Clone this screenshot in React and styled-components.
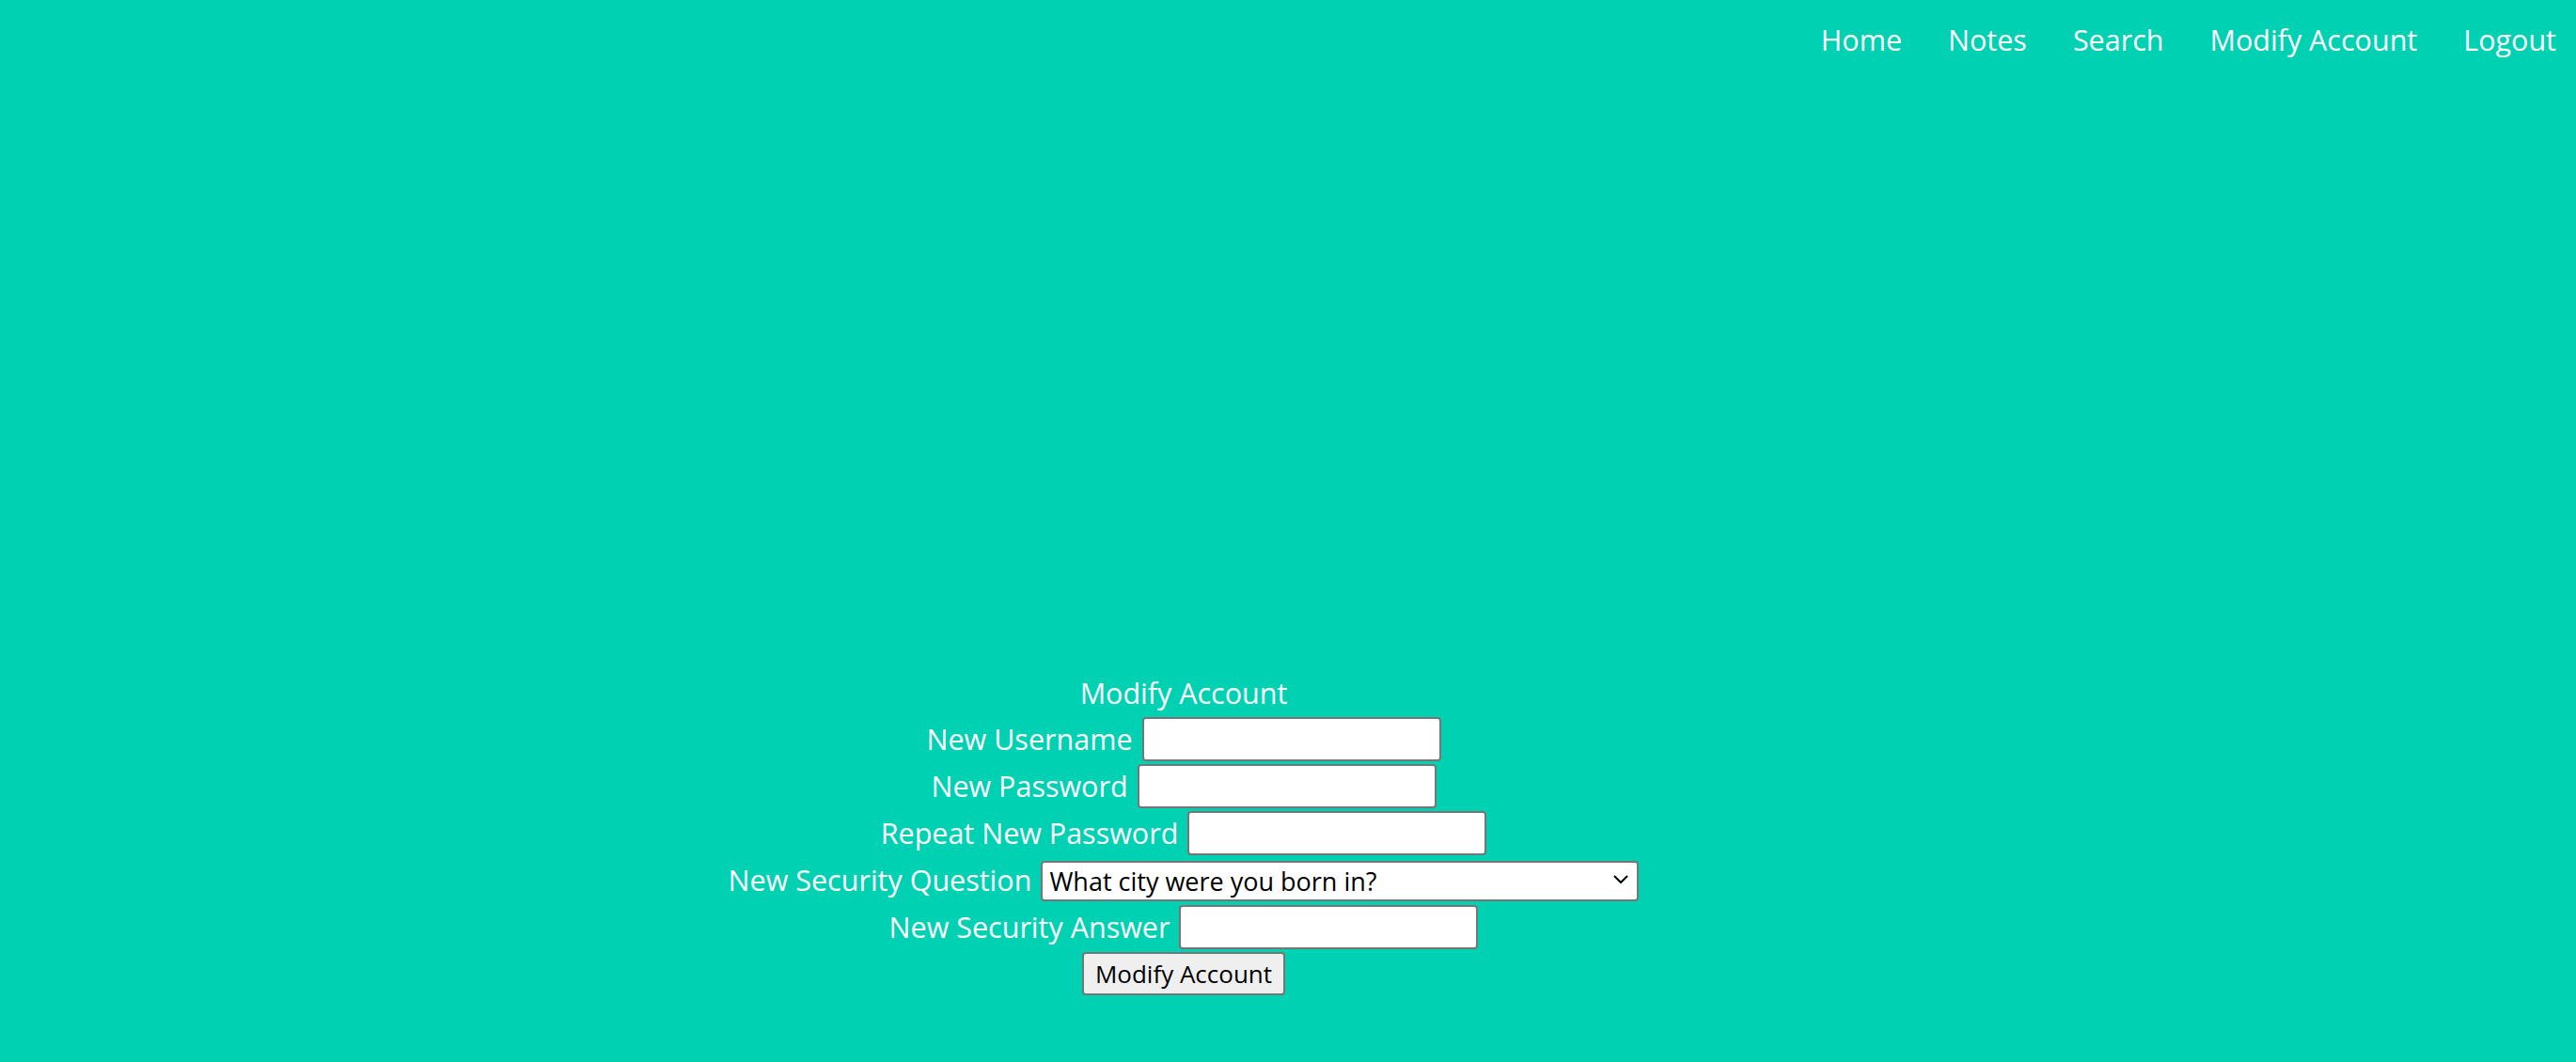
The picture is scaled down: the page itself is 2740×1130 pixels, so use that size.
import React from 'react';
import styled, { createGlobalStyle } from 'styled-components';

const GlobalStyle = createGlobalStyle`
  html, body {
    margin: 0;
    padding: 0;
    background: #00d1b2;
  }
  body {
    font-family: "Open Sans", "Noto Sans", sans-serif;
    color: #fff;
  }
`;

const Page = styled.div`
  min-height: 1130px;
  display: flex;
  flex-direction: column;
`;

const NavBar = styled.nav`
  display: flex;
  justify-content: flex-end;
  gap: 49px;
  padding: 20px 21px 0 0;
`;

const NavLink = styled.a`
  color: #fff;
  font-size: 30.5px;
  line-height: 44px;
  text-decoration: none;
  cursor: pointer;
`;

const FormSection = styled.form`
  width: 2518px;
  margin-top: 651px;
  display: flex;
  flex-direction: column;
  align-items: center;
`;

const Title = styled.h1`
  margin: 0 0 2px;
  font-size: 30.5px;
  font-weight: 400;
  line-height: 44px;
`;

const Row = styled.div`
  display: flex;
  align-items: center;
  gap: 10px;
  height: 50px;
  font-size: 30.5px;
`;

const Label = styled.label`
  white-space: nowrap;
`;

const TextInput = styled.input`
  box-sizing: border-box;
  width: 318px;
  height: 47px;
  border: 2px solid #767676;
  border-radius: 4px;
  background: #fff;
  font-size: 26px;
  padding: 2px 4px;
`;

const SelectWrap = styled.div`
  position: relative;
  width: 636px;
  height: 43px;
`;

const Select = styled.select`
  appearance: none;
  box-sizing: border-box;
  width: 100%;
  height: 100%;
  border: 2px solid #767676;
  border-radius: 4px;
  background: #fff;
  color: #000;
  font-family: "Open Sans", "Noto Sans", sans-serif;
  font-size: 27px;
  padding: 0 40px 0 7px;
`;

const Chevron = styled.svg`
  position: absolute;
  right: 10px;
  top: 15px;
  pointer-events: none;
`;

const SubmitButton = styled.button`
  box-sizing: border-box;
  width: 216px;
  height: 46px;
  border: 2px solid #767676;
  border-radius: 4px;
  background: #efefef;
  color: #000;
  font-family: "Open Sans", "Noto Sans", sans-serif;
  font-size: 26px;
  padding: 0;
`;

const navItems = ['Home', 'Notes', 'Search', 'Modify Account', 'Logout'];

const questions = [
  'What city were you born in?',
  'What was the name of your first pet?',
  'What is your mother\'s maiden name?',
];

export default function App() {
  return (
    <Page>
      <GlobalStyle />
      <NavBar>
        {navItems.map((item) => (
          <NavLink key={item}>{item}</NavLink>
        ))}
      </NavBar>
      <FormSection onSubmit={(e) => e.preventDefault()}>
        <Title>Modify Account</Title>
        <Row>
          <Label htmlFor="username">New Username</Label>
          <TextInput id="username" type="text" />
        </Row>
        <Row>
          <Label htmlFor="password">New Password</Label>
          <TextInput id="password" type="password" />
        </Row>
        <Row>
          <Label htmlFor="repeat">Repeat New Password</Label>
          <TextInput id="repeat" type="password" />
        </Row>
        <Row>
          <Label htmlFor="question">New Security Question</Label>
          <SelectWrap>
            <Select id="question" defaultValue={questions[0]}>
              {questions.map((q) => (
                <option key={q} value={q}>{q}</option>
              ))}
            </Select>
            <Chevron width="18" height="12" viewBox="0 0 18 12">
              <path d="M2 2 L9 9 L16 2" fill="none" stroke="#000" strokeWidth="2" />
            </Chevron>
          </SelectWrap>
        </Row>
        <Row>
          <Label htmlFor="answer">New Security Answer</Label>
          <TextInput id="answer" type="text" />
        </Row>
        <Row>
          <SubmitButton type="submit">Modify Account</SubmitButton>
        </Row>
      </FormSection>
    </Page>
  );
}
